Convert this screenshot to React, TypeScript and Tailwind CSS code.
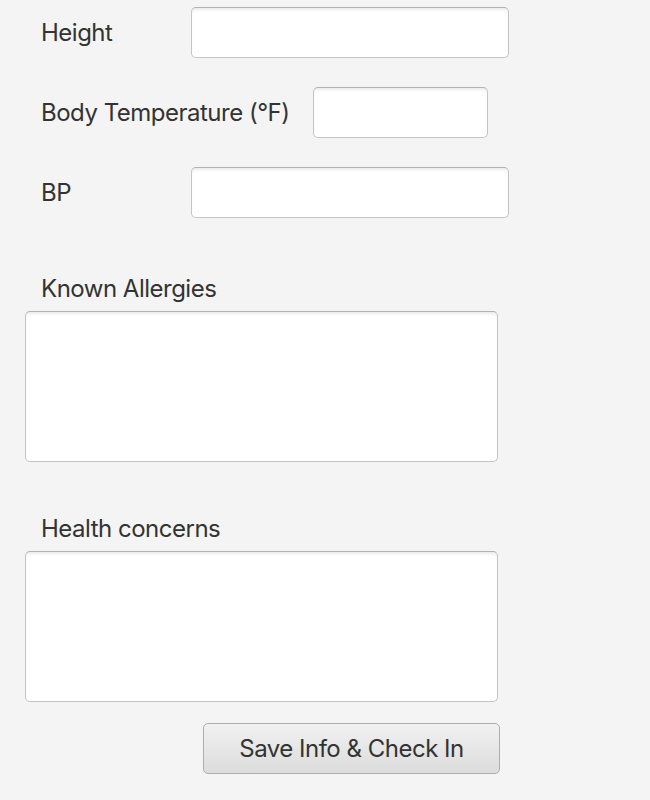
import React from "react";

const inputCls =
  "h-[51px] rounded-[5px] border border-[#c4c4c4] border-t-[#b3b3b3] bg-white shadow-[inset_0_3px_3px_-1px_rgba(0,0,0,0.08)]";

export default function App() {
  return (
    <div
      className="w-[650px] h-[800px] bg-[#f4f4f4] text-[#333333] text-[24px] tracking-[-0.5px] overflow-hidden"
      style={{ fontFamily: "Inter, 'Noto Sans', sans-serif" }}
    >
      <div className="flex flex-col pt-[7px] pl-[41px] gap-[29px]">
        <div className="flex items-center h-[51px]">
          <div className="w-[150px]">Height</div>
          <div className={`${inputCls} w-[318px]`} />
        </div>
        <div className="flex items-center h-[51px]">
          <div className="w-[272px]">Body Temperature (°F)</div>
          <div className={`${inputCls} w-[175px]`} />
        </div>
        <div className="flex items-center h-[51px]">
          <div className="w-[150px]">BP</div>
          <div className={`${inputCls} w-[318px]`} />
        </div>
      </div>
      <div className="pl-[25px] mt-[55px]">
        <div className="pl-[16px] h-[38px] leading-[32px]">Known Allergies</div>
        <div className={`${inputCls} w-[473px] h-[151px]`} />
      </div>
      <div className="pl-[25px] mt-[51px]">
        <div className="pl-[16px] h-[38px] leading-[32px]">Health concerns</div>
        <div className={`${inputCls} w-[473px] h-[151px]`} />
      </div>
      <div className="pl-[203px] mt-[21px]">
        <button className="w-[297px] h-[51px] rounded-[5px] border border-[#adadad] bg-gradient-to-b from-[#f1f1f1] to-[#dcdcdc] text-[#333333]">
          Save Info &amp; Check In
        </button>
      </div>
    </div>
  );
}
